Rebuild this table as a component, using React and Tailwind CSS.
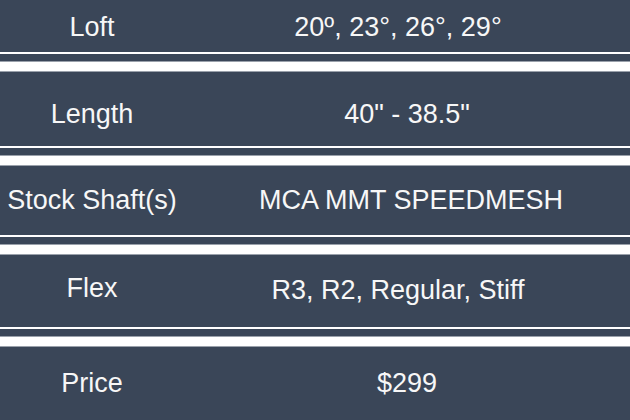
export default function App() {
  const Sep = () => (
    <div className="flex flex-col">
      <div className="h-[2px] bg-white" />
      <div className="h-[7px] bg-[#3a4658]" />
      <div className="h-[11px] bg-white border-y border-[#9aa1ab]" />
    </div>
  );
  return (
    <div
      className="w-[630px] h-[420px] overflow-hidden bg-[#3a4658] text-[#f7f7f7] text-[27px] leading-none flex flex-col"
      style={{ fontFamily: '"Liberation Sans", Arial, sans-serif' }}
    >
      <div className="h-[52px] flex items-center pt-[2px]">
        <div className="w-[184px] text-center">Loft</div>
        <div className="flex-1 text-center pr-[18px]">20º, 23°, 26°, 29°</div>
      </div>
      <Sep />
      <div className="h-[74px] flex items-center pt-[11px]">
        <div className="w-[184px] text-center">Length</div>
        <div className="flex-1 text-center">40" - 38.5"</div>
      </div>
      <Sep />
      <div className="h-[69px] flex items-center pb-[1px]">
        <div className="w-[184px] text-center">Stock Shaft(s)</div>
        <div className="flex-1 text-center pl-[8px]">MCA MMT SPEEDMESH</div>
      </div>
      <Sep />
      <div className="h-[72px] flex items-center">
        <div className="w-[184px] text-center pb-[5px]">Flex</div>
        <div className="flex-1 text-center pr-[18px] pb-[1px]">R3, R2, Regular, Stiff</div>
      </div>
      <Sep />
      <div className="h-[72px] flex items-center">
        <div className="w-[184px] text-center">Price</div>
        <div className="flex-1 text-center">$299</div>
      </div>
    </div>
  );
}
